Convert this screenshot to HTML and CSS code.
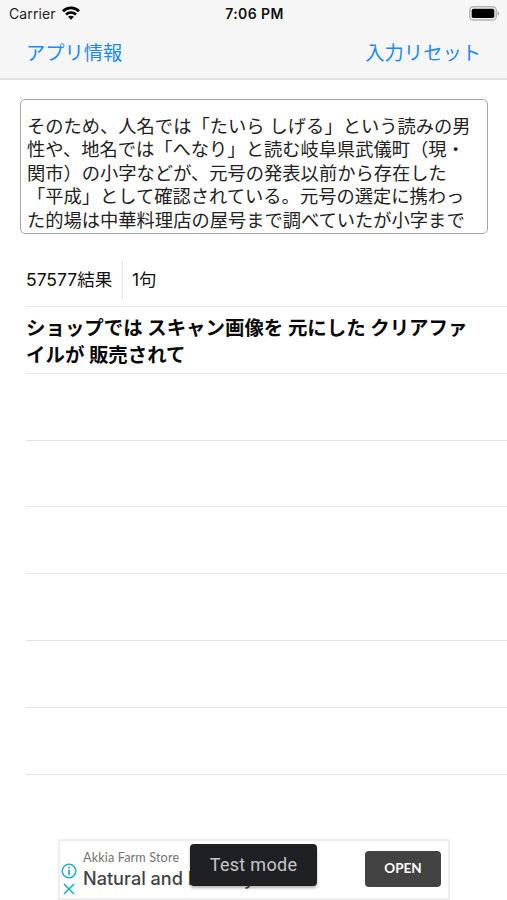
FILE: index.html
```html
<!DOCTYPE html>
<html lang="ja">
<head>
<meta charset="utf-8">
<title>57577</title>
<link rel="stylesheet" href="styles.css">
</head>
<body>
<header class="top">
  <div class="status">
    <div class="carrier"><span>Carrier</span>
      <svg class="wifi" width="18" height="14" viewBox="0 0 18 14" fill="none" stroke="#000" stroke-width="2.7"><path d="M1 5.2C5.4.8 12.6.8 17 5.2M4 8.5c2.8-2.7 7.2-2.7 10 0"/><path d="M9 13.7 6.1 10.8c1.6-1.5 4.2-1.5 5.8 0z" fill="#000" stroke="none"/></svg>
    </div>
    <div class="time">7:06 PM</div>
    <svg class="battery" width="31" height="15" viewBox="0 0 31 15"><rect x=".8" y=".8" width="26.4" height="13.2" rx="3.6" fill="#f7f6f7" stroke="#b4b4b4" stroke-width="1.5"/><rect x="2.7" y="2.7" width="22.6" height="9.4" rx="1.8"/><path d="M28.5 5.2c2.2.7 2.2 3.8 0 4.5z" fill="#aaa"/></svg>
  </div>
  <nav class="nav"><span class="info">アプリ情報</span><span class="reset">入力リセット</span></nav>
</header>
<main>
  <div class="input">そのため、人名では「たいら しげる」という読みの男<br>性や、地名では「へなり」と読む岐阜県武儀町（現・<br>関市）の小字などが、元号の発表以前から存在した<br>「平成」として確認されている。元号の選定に携わっ<br>た的場は中華料理店の屋号まで調べていたが小字まで</div>
  <div class="summary"><span class="result">57577結果</span><span class="count">1句</span></div>
  <ul class="list">
    <li>ショップでは スキャン画像を 元にした クリアファ<br>イルが 販売されて</li>
    <li></li><li></li><li></li><li></li><li></li><li></li>
  </ul>
</main>
<footer class="ad">
  <div class="marks">
    <svg width="16" height="16" viewBox="0 0 16 16" fill="none" stroke="#20add0" stroke-width="1.5"><circle cx="8" cy="8" r="6.8"/><path d="M8 6.8v5M8 3.8v1.7" stroke-width="1.8"/></svg>
    <svg width="12" height="12" viewBox="0 0 12 12" fill="none" stroke="#20add0" stroke-width="1.6"><path d="m1 1 10 10M11 1 1 11"/></svg>
  </div>
  <div class="copy"><div class="store">Akkia Farm Store</div><div class="headline">Natural and Healthy</div></div>
  <div class="open">OPEN</div>
  <div class="toast">Test mode</div>
</footer>
</body>
</html>
```
FILE: styles.css
```css
* { box-sizing: border-box; }
body {
  margin: 0;
  width: 507px;
  height: 900px;
  overflow: hidden;
  background: #fff;
  color: #111;
  font-family: Inter, "Noto Sans CJK JP", sans-serif;
  display: flex;
  flex-direction: column;
}
.top { height: 80px; background: #f7f6f7; border-bottom: 2px solid #e4e4e4; }
.status {
  height: 27px;
  padding: 0 7px 0 9px;
  display: grid;
  grid-template-columns: 1fr auto 1fr;
  align-items: center;
  font-size: 14px;
  line-height: 27px;
}
.carrier { display: flex; align-items: center; gap: 6px; font-size: 14px; letter-spacing: .1px; color: #222; }
.wifi { margin-top: -2px; }
.time { font-weight: 600; letter-spacing: .4px; }
.battery { justify-self: end; margin-top: -1px; }
.nav {
  display: flex;
  justify-content: space-between;
  padding: 2px 26px 0 26px;
  line-height: 48px;
  font-size: 19.3px;
  color: #2089fa;
  white-space: nowrap;
}
main { flex: none; height: 759px; }
.input {
  height: 135px;
  margin: 19px 19px 0 20px;
  padding: 15px 0 0 6px;
  border: 1.5px solid #a6a6a6;
  border-radius: 5px;
  overflow: hidden;
  white-space: nowrap;
  font-size: 18.28px;
  line-height: 23.4px;
  color: #222;
}
.summary {
  display: flex;
  align-items: center;
  height: 38px;
  margin: 27px 0 7px 26px;
  font-size: 17.5px;
  line-height: 38px;
  white-space: nowrap;
}
.result { width: 97px; border-right: 1px solid #e2e2e2; }
.count { margin-left: 9px; }
.list { margin: 0 0 0 26px; padding: 0; list-style: none; border-top: 1px solid #e5e5e5; }
.list li {
  height: 66.8px;
  padding-top: 8px;
  border-bottom: 1px solid #e5e5e5;
  font-size: 19.45px;
  font-weight: 700;
  line-height: 27px;
  color: #080808;
  white-space: nowrap;
}
.ad {
  position: relative;
  width: 392px;
  height: 61px;
  margin-left: 58px;
  border: 2px solid #eee;
  display: flex;
}
.marks { width: 17px; display: flex; flex-direction: column; align-items: center; gap: 4px; padding-top: 22px; }
.copy { margin-left: 6px; padding-top: 7px; width: 222px; white-space: nowrap; }
.store { font: 12.7px/18px Lato, sans-serif; letter-spacing: .12px; color: #747474; }
.headline { padding-top: 1px; font: 500 18.1px/22px Inter, sans-serif; color: #444; }
.open {
  width: 76px;
  height: 36px;
  margin: 10px 0 0 60px;
  border-radius: 4px;
  background: #434343;
  color: #fff;
  text-align: center;
  font: 700 13.5px/35px Lato, sans-serif;
}
.toast {
  position: absolute;
  left: 130px;
  top: 3px;
  width: 127px;
  height: 42px;
  border-radius: 4px;
  background: #1e2023;
  color: #c6c7c8;
  text-align: center;
  font: 18px/41px Roboto, sans-serif;
  letter-spacing: .3px;
  box-shadow: 0 2px 3px rgba(0, 0, 0, .3);
}
```
